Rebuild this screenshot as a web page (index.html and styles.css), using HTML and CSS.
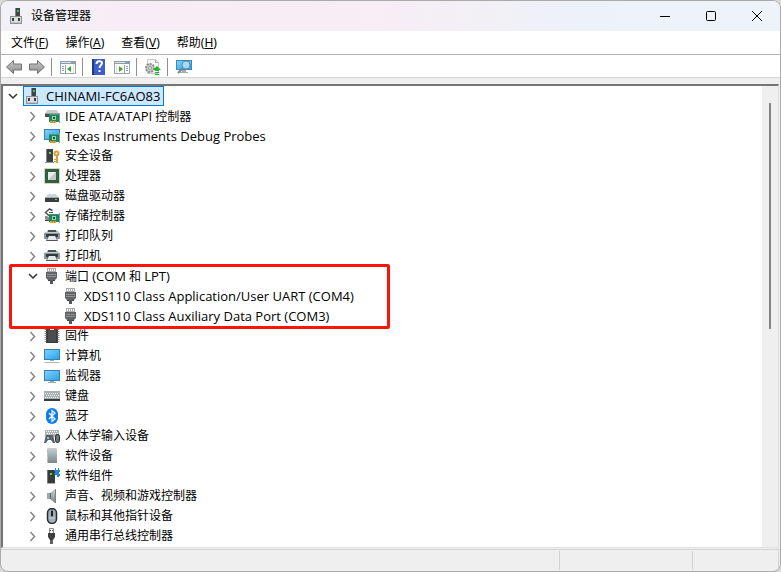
FILE: index.html
```
<!DOCTYPE html>
<html lang="zh-CN">
<head>
    <meta charset="UTF-8">
    <meta name="viewport" content="width=device-width, initial-scale=1.0">
    <title>设备管理器</title>
    <link rel="stylesheet" href="styles.css">
</head>
<body>
    <!-- Shared icons -->
    <svg class="sprite" aria-hidden="true">
        <defs>
            <linearGradient id="screen" x1="0" y1="0" x2="1" y2="1">
                <stop offset="0" stop-color="#7fd0fa"/>
                <stop offset="1" stop-color="#2ba3ec"/>
            </linearGradient>
            <linearGradient id="metal" x1="0" y1="0" x2="0" y2="1">
                <stop offset="0" stop-color="#c9ced1"/>
                <stop offset="1" stop-color="#7f878b"/>
            </linearGradient>
            <linearGradient id="arrow" x1="0" y1="0" x2="0" y2="1">
                <stop offset="0" stop-color="#c8c8c8"/>
                <stop offset="1" stop-color="#8e8e8e"/>
            </linearGradient>
        </defs>
        <symbol id="i-pc" viewBox="0 0 16 16">
            <path d="M6 0h5v9H6z" fill="#414345"/>
            <path d="M6 0h1v9H6z" fill="#85888a"/>
            <path d="M8 2h2v2H8z" fill="#37c84b"/>
            <path d="M1 8h12v8H1z" fill="#8f9295"/>
            <path d="M2 9h10v6H2z" fill="#dcdee0"/>
            <path d="M3 10h2v3H3zM9 10h2v3H9z" fill="#393b3d"/>
            <path d="M2 14h10v1H2z" fill="#bfc2c4"/>
        </symbol>
        <symbol id="i-card" viewBox="0 0 16 16">
            <path d="M5 6h10v8H5z" fill="#21845c"/>
            <path d="M5 6.500h10" stroke="#3c9c74" fill="none"/>
            <path d="M8 8h4v4H8z" fill="#8fdcb4"/>
            <path d="M9 9h2v2H9z" fill="#165a3e"/>
            <path d="M6 13h6v2H6z" fill="#e8a723"/>
            <path d="M8 13h1v2H8zM10 13h1v2h-1z" fill="#c98a1c"/>
            <path d="M15 5h1v10h-1z" fill="#8f989b"/>
        </symbol>
        <symbol id="i-ide" viewBox="0 0 16 16">
            <path d="M3 2h10l2 4H1z" fill="#c8ccce"/>
            <path d="M1 5h14v4H1z" fill="#4a4d4f"/>
            <path d="M1 5h14v1H1z" fill="#9da1a3"/>
            <use href="#i-card"/>
        </symbol>
        <symbol id="i-probe" viewBox="0 0 16 16">
            <path d="M0 1h16v11H0z" fill="#3983b4"/>
            <path d="M1 2h14v9H1z" fill="url(#screen)"/>
            <use href="#i-card"/>
        </symbol>
        <symbol id="i-security" viewBox="0 0 16 16">
            <path d="M2 1h7v13H2z" fill="#3c3e40"/>
            <path d="M2 1h1v13H2z" fill="#85888a"/>
            <path d="M5 4h2v2H5z" fill="#4ce35d"/>
            <path d="M1 14h9v1H1z" fill="#9ca0a2"/>
            <circle cx="12.500" cy="5.500" r="2" fill="none" stroke="#d99b3c" stroke-width="2"/>
            <path d="M12 8h2v7h-2zM10 11h2v1h-2zM10 13h2v1h-2z" fill="#d99b3c"/>
        </symbol>
        <symbol id="i-cpu" viewBox="0 0 16 16">
            <rect x="0.500" y="0.500" width="15" height="15" fill="none" stroke="#c2a867" stroke-dasharray="1 1"/>
            <path d="M1 1h14v14H1z" fill="#2b6048"/>
            <path d="M4 4h8v8H4z" fill="#c4c8c5"/>
            <path d="M4 4h8L4 12z" fill="#e8ebe8"/>
        </symbol>
        <symbol id="i-disk" viewBox="0 0 16 16">
            <path d="M4 6h8l3 4H1z" fill="#d2d5d7"/>
            <path d="M1 9h14v5H1z" fill="#3c3f41"/>
            <path d="M1 9h14v1H1z" fill="#a5a9ab"/>
            <path d="M11 11h2v1h-2z" fill="#4bdd59"/>
        </symbol>
        <symbol id="i-storage" viewBox="0 0 16 16">
            <path d="M8.500 2.500L5.500 1l-4 3.500 4 3.500 2-1.500" fill="none" stroke="#505456" stroke-width="1.500"/>
            <path d="M5 4h4v1H5z" fill="#505456"/>
            <path d="M1 8h2l3 2v3H3l-2-2z" fill="#8a8e90"/>
            <path d="M1 12h5v1H1z" fill="#444"/>
            <use href="#i-card"/>
        </symbol>
        <symbol id="i-printer" viewBox="0 0 16 16">
            <path d="M4 2h8l1 3H3z" fill="#4a5256"/>
            <path d="M1 4h14l1 2v5H0V6z" fill="#8d979c"/>
            <path d="M1 4h14v1H1z" fill="#c6cdd0"/>
            <path d="M12 3h2v1h-2z" fill="#44d957"/>
            <path d="M2 6h12v3H2z" fill="#35393b"/>
            <path d="M4 8h8l2 5H2z" fill="#4d5457"/>
            <path d="M5 8h6l2 4H3z" fill="#e3e9eb"/>
        </symbol>
        <symbol id="i-port" viewBox="0 0 16 16">
            <path d="M3 0h9v5H3z" fill="#a9abac"/>
            <path d="M4 1h1v2H4zM6 1h1v2H6zM8 1h1v2H8zM10 1h1v2h-1z" fill="#fff"/>
            <path d="M2 4h11v6l-2 2H4l-2-2z" fill="#626466"/>
            <path d="M3 6h9v1H3zM3 8h9v1H3z" fill="#909294"/>
            <path d="M4 12h7v1H4z" fill="#444648"/>
            <path d="M6 12h3v4H6z" fill="#55585a"/>
        </symbol>
        <symbol id="i-firmware" viewBox="0 0 16 16">
            <path d="M2 1h12v14H2z" fill="#3a3a3b"/>
            <path d="M1.500 1v14M14.500 1v14" stroke="#8b8b8b" stroke-width="2" stroke-dasharray="1 1"/>
            <path d="M4 1h8v13H4z" fill="#4b4c4d"/>
            <path d="M6 0h4v2H6z" fill="#e6e6e6"/>
        </symbol>
        <symbol id="i-monitor" viewBox="0 0 16 16">
            <path d="M0 2h16v11H0z" fill="#3482b2"/>
            <path d="M1 3h14v9H1z" fill="url(#screen)"/>
            <path d="M6 13h4v1H6zM4 14h8v1H4z" fill="#9ba8af"/>
        </symbol>
        <symbol id="i-computer" viewBox="0 0 16 16">
            <path d="M0 1h16v11H0z" fill="#3482b2"/>
            <path d="M1 2h14v9H1z" fill="url(#screen)"/>
            <path d="M6 12h4v1H6z" fill="#9ba8af"/>
            <path d="M1 14h14l1 1H0z" fill="#aab6c2"/>
        </symbol>
        <symbol id="i-keyboard" viewBox="0 0 16 16">
            <path d="M0 3h16v8H0z" fill="#a9aeb1"/>
            <path d="M1 5.500h14M2 7.500h13M1 9.500h14" stroke="#f5f7f8" stroke-dasharray="1 1"/>
            <path d="M0 11h16v2H0z" fill="#383b3d"/>
        </symbol>
        <symbol id="i-bluetooth" viewBox="0 0 16 16">
            <rect x="2" y="0" width="12" height="16" rx="6" fill="#0b7df0"/>
            <path d="M5 5l6 6-3 2.500v-11L11 5l-6 6" fill="none" stroke="#fff" stroke-width="1.200"/>
        </symbol>
        <symbol id="i-hid" viewBox="0 0 16 16">
            <path d="M1 2h14v7H1z" fill="#b0b5b8"/>
            <path d="M2 3.500h12M3 5.500h11" stroke="#fff" stroke-dasharray="1 1"/>
            <path d="M2 7h7l2 8H9l-2-3H4l-2 3H0z" fill="#596168"/>
            <path d="M3 9h2v2H3z" fill="#73c8ef"/>
            <path d="M7 9h1v1H7z" fill="#e64a3c"/>
            <rect x="11.500" y="6.500" width="4" height="8" rx="2" fill="#6c747a" stroke="#282b2e"/>
        </symbol>
        <symbol id="i-software" viewBox="0 0 16 16">
            <path d="M3 1l1-1h8l1 1v14H3z" fill="url(#metal)"/>
            <path d="M3 1h1v14H3z" fill="#b8bec1"/>
            <path d="M7 5h2v2H7z" fill="#45d7f2"/>
        </symbol>
        <symbol id="i-component" viewBox="0 0 16 16">
            <path d="M3 2h8v13H3z" fill="#393b3d"/>
            <path d="M3 2h1v13H3z" fill="#777a7c"/>
            <path d="M6 5h2v2H6z" fill="#48df57"/>
            <path d="M3 15h8v1H3z" fill="#a9acae"/>
            <path d="M11 0h1v2h2V0h1v2h1v2h-1v2h1v2h-1v1h-2V7h-2V6h-1V5h1V3h-1V2h1z" fill="#2388d8"/>
        </symbol>
        <symbol id="i-sound" viewBox="0 0 16 16">
            <path d="M3 5h3v6H3z" fill="#a0a5a8"/>
            <path d="M6 5l5-4v14l-5-4z" fill="url(#metal)"/>
            <path d="M11 1h1v14h-1z" fill="#7a7f82"/>
            <path d="M6 5h1v6H6z" fill="#606568"/>
        </symbol>
        <symbol id="i-mouse" viewBox="0 0 16 16">
            <rect x="3.500" y="0.500" width="9" height="15" rx="4.500" fill="#a4afb8" stroke="#292d31" stroke-width="1.500"/>
            <path d="M8 1v8" stroke="#43494e"/>
            <path d="M7 3h2v5H7z" fill="#1e2124"/>
            <path d="M5 10h6" stroke="#cdd5da"/>
        </symbol>
        <symbol id="i-usb" viewBox="0 0 16 16">
            <path d="M5.500 0.500h4v5h-4z" fill="#f2f2f2" stroke="#8a8a8a"/>
            <path d="M6 2h1v1H6zM8 2h1v1H8z" fill="#555"/>
            <path d="M4 5h7v4l-2 3H6L4 9z" fill="#3d3f41"/>
            <path d="M6 12h3v4H6z" fill="#606264"/>
        </symbol>
        <symbol id="i-right" viewBox="0 0 16 16">
            <path d="M5.500 4l4 4.500-4 4.500" fill="none" stroke="#858585" stroke-width="1.500"/>
        </symbol>
        <symbol id="i-down" viewBox="0 0 16 16">
            <path d="M4 6l4 4 4-4" fill="none" stroke="#333" stroke-width="1.500"/>
        </symbol>
    </svg>

    <div class="window">
        <header class="titlebar">
            <svg class="icon"><use href="#i-pc"/></svg>
            <h1>设备管理器</h1>
            <div class="window-controls">
                <button type="button" aria-label="最小化"><svg class="icon" viewBox="0 0 16 16"><path d="M3 8.500h10"/></svg></button>
                <button type="button" aria-label="最大化"><svg class="icon" viewBox="0 0 16 16"><rect x="3.500" y="3.500" width="9" height="9" rx="1"/></svg></button>
                <button type="button" aria-label="关闭"><svg class="icon" viewBox="0 0 16 16"><path d="M3 3l10 10M13 3L3 13"/></svg></button>
            </div>
        </header>

        <nav class="menubar">
            <button type="button">文件(<u>F</u>)</button>
            <button type="button">操作(<u>A</u>)</button>
            <button type="button">查看(<u>V</u>)</button>
            <button type="button">帮助(<u>H</u>)</button>
        </nav>

        <div class="toolbar">
            <button type="button" aria-label="后退">
                <svg class="icon" viewBox="0 0 16 16"><path d="M0.500 8L7.500 1.500v3.500h8v6h-8v3.500z" fill="url(#arrow)" stroke="#707070"/></svg>
            </button>
            <button type="button" aria-label="前进">
                <svg class="icon" viewBox="0 0 16 16"><path d="M15.500 8L8.500 1.500v3.500h-8v6h8v3.500z" fill="url(#arrow)" stroke="#707070"/></svg>
            </button>
            <span class="separator"></span>
            <button type="button" aria-label="显示控制台树">
                <svg class="icon" viewBox="0 0 16 16">
                    <path d="M0.500 2.500h15v12H0.500z" fill="#fff" stroke="#9aa3ab"/>
                    <path d="M0 2h16v3H0z" fill="#8f9ba7"/>
                    <path d="M1 3h10v1H1z" fill="#dfe4e8"/>
                    <path d="M5.500 6v9" stroke="#9aa3ab"/>
                    <path d="M2 7.500h2M2 9.500h2M2 11.500h2" stroke="#7d9cc4"/>
                    <path d="M11 7v6l-4-3z" fill="#3ba72f"/>
                    <path d="M13.500 6v8" stroke="#ddd"/>
                </svg>
            </button>
            <span class="separator"></span>
            <button type="button" aria-label="帮助">
                <svg class="icon" viewBox="0 0 16 16">
                    <path d="M1 0h13v16H1z" fill="#3e5fc5"/>
                    <path d="M1 0h2v16H1z" fill="#233a84"/>
                    <path d="M5.500 5c0-3.500 5.500-3.500 5.500-1 0 2-2.500 2.500-2.500 5M8.500 11v2" fill="none" stroke="#fff" stroke-width="2"/>
                </svg>
            </button>
            <button type="button" aria-label="属性">
                <svg class="icon" viewBox="0 0 16 16">
                    <path d="M0.500 2.500h15v12H0.500z" fill="#fff" stroke="#9aa3ab"/>
                    <path d="M0 2h16v3H0z" fill="#8f9ba7"/>
                    <path d="M1 3h10v1H1z" fill="#dfe4e8"/>
                    <path d="M10.500 6v9" stroke="#9aa3ab"/>
                    <path d="M12 7.500h2M12 9.500h2M12 11.500h2" stroke="#7d9cc4"/>
                    <path d="M5 7v6l4-3z" fill="#3ba72f"/>
                    <path d="M2.500 6v8" stroke="#ddd"/>
                </svg>
            </button>
            <span class="separator"></span>
            <button type="button" aria-label="更新驱动程序">
                <svg class="icon" viewBox="0 0 16 16">
                    <path d="M2.500 0.500h8l3 3v11h-11z" fill="#f7f7f7" stroke="#c8c8c8"/>
                    <path d="M10.500 0.500v3h3" fill="none" stroke="#aaa"/>
                    <circle cx="5" cy="9" r="4" fill="#c4c4c4" stroke="#8c8c8c" stroke-width="2" stroke-dasharray="2 1"/>
                    <circle cx="5" cy="9" r="3" fill="#d0d0d0"/>
                    <circle cx="5" cy="9" r="1.500" fill="#fff" stroke="#888"/>
                    <path d="M12 7l4 4h-2v1h-4v-1H8z" fill="#15b82b"/>
                    <path d="M10 13h4v1h-4zM10 15h4v1h-4z" fill="#15b82b"/>
                </svg>
            </button>
            <span class="separator"></span>
            <button type="button" aria-label="扫描检测硬件改动">
                <svg class="icon" viewBox="0 0 16 16">
                    <path d="M0 1h16v10H0z" fill="#398abb"/>
                    <path d="M1 2h14v8H1z" fill="url(#screen)"/>
                    <path d="M6 11h4v2H6zM4 13h8v1H4z" fill="#a3adb2"/>
                    <path d="M7 9l-5 5" stroke="#70848f" stroke-width="2"/>
                    <circle cx="10" cy="6" r="4" fill="#b9e5fb" fill-opacity="0.800" stroke="#6d8896"/>
                </svg>
            </button>
        </div>

        <main class="content">
            <ul class="tree">
                <li>
                    <div class="row">
                        <button type="button" class="toggle" aria-label="折叠"><svg class="icon"><use href="#i-down"/></svg></button>
                        <span class="node selected"><svg class="icon"><use href="#i-pc"/></svg><span class="latin">CHINAMI-FC6AO83</span></span>
                    </div>
                    <ul>
                        <li><div class="row"><button type="button" class="toggle" aria-label="展开"><svg class="icon"><use href="#i-right"/></svg></button><span class="node"><svg class="icon"><use href="#i-ide"/></svg><span><span class="latin">IDE ATA/ATAPI</span> 控制器</span></span></div></li>
                        <li><div class="row"><button type="button" class="toggle" aria-label="展开"><svg class="icon"><use href="#i-right"/></svg></button><span class="node"><svg class="icon"><use href="#i-probe"/></svg><span class="latin">Texas Instruments Debug Probes</span></span></div></li>
                        <li><div class="row"><button type="button" class="toggle" aria-label="展开"><svg class="icon"><use href="#i-right"/></svg></button><span class="node"><svg class="icon"><use href="#i-security"/></svg><span>安全设备</span></span></div></li>
                        <li><div class="row"><button type="button" class="toggle" aria-label="展开"><svg class="icon"><use href="#i-right"/></svg></button><span class="node"><svg class="icon"><use href="#i-cpu"/></svg><span>处理器</span></span></div></li>
                        <li><div class="row"><button type="button" class="toggle" aria-label="展开"><svg class="icon"><use href="#i-right"/></svg></button><span class="node"><svg class="icon"><use href="#i-disk"/></svg><span>磁盘驱动器</span></span></div></li>
                        <li><div class="row"><button type="button" class="toggle" aria-label="展开"><svg class="icon"><use href="#i-right"/></svg></button><span class="node"><svg class="icon"><use href="#i-storage"/></svg><span>存储控制器</span></span></div></li>
                        <li><div class="row"><button type="button" class="toggle" aria-label="展开"><svg class="icon"><use href="#i-right"/></svg></button><span class="node"><svg class="icon"><use href="#i-printer"/></svg><span>打印队列</span></span></div></li>
                        <li><div class="row"><button type="button" class="toggle" aria-label="展开"><svg class="icon"><use href="#i-right"/></svg></button><span class="node"><svg class="icon"><use href="#i-printer"/></svg><span>打印机</span></span></div></li>
                        <li class="ports">
                            <div class="row"><button type="button" class="toggle" aria-label="折叠"><svg class="icon"><use href="#i-down"/></svg></button><span class="node"><svg class="icon"><use href="#i-port"/></svg><span>端口 <span class="latin">(COM</span> 和 <span class="latin">LPT)</span></span></span></div>
                            <ul>
                                <li><div class="row"><span class="node"><svg class="icon"><use href="#i-port"/></svg><span class="latin">XDS110 Class Application/User UART (COM4)</span></span></div></li>
                                <li><div class="row"><span class="node"><svg class="icon"><use href="#i-port"/></svg><span class="latin">XDS110 Class Auxiliary Data Port (COM3)</span></span></div></li>
                            </ul>
                        </li>
                        <li><div class="row"><button type="button" class="toggle" aria-label="展开"><svg class="icon"><use href="#i-right"/></svg></button><span class="node"><svg class="icon"><use href="#i-firmware"/></svg><span>固件</span></span></div></li>
                        <li><div class="row"><button type="button" class="toggle" aria-label="展开"><svg class="icon"><use href="#i-right"/></svg></button><span class="node"><svg class="icon"><use href="#i-computer"/></svg><span>计算机</span></span></div></li>
                        <li><div class="row"><button type="button" class="toggle" aria-label="展开"><svg class="icon"><use href="#i-right"/></svg></button><span class="node"><svg class="icon"><use href="#i-monitor"/></svg><span>监视器</span></span></div></li>
                        <li><div class="row"><button type="button" class="toggle" aria-label="展开"><svg class="icon"><use href="#i-right"/></svg></button><span class="node"><svg class="icon"><use href="#i-keyboard"/></svg><span>键盘</span></span></div></li>
                        <li><div class="row"><button type="button" class="toggle" aria-label="展开"><svg class="icon"><use href="#i-right"/></svg></button><span class="node"><svg class="icon"><use href="#i-bluetooth"/></svg><span>蓝牙</span></span></div></li>
                        <li><div class="row"><button type="button" class="toggle" aria-label="展开"><svg class="icon"><use href="#i-right"/></svg></button><span class="node"><svg class="icon"><use href="#i-hid"/></svg><span>人体学输入设备</span></span></div></li>
                        <li><div class="row"><button type="button" class="toggle" aria-label="展开"><svg class="icon"><use href="#i-right"/></svg></button><span class="node"><svg class="icon"><use href="#i-software"/></svg><span>软件设备</span></span></div></li>
                        <li><div class="row"><button type="button" class="toggle" aria-label="展开"><svg class="icon"><use href="#i-right"/></svg></button><span class="node"><svg class="icon"><use href="#i-component"/></svg><span>软件组件</span></span></div></li>
                        <li><div class="row"><button type="button" class="toggle" aria-label="展开"><svg class="icon"><use href="#i-right"/></svg></button><span class="node"><svg class="icon"><use href="#i-sound"/></svg><span>声音、视频和游戏控制器</span></span></div></li>
                        <li><div class="row"><button type="button" class="toggle" aria-label="展开"><svg class="icon"><use href="#i-right"/></svg></button><span class="node"><svg class="icon"><use href="#i-mouse"/></svg><span>鼠标和其他指针设备</span></span></div></li>
                        <li><div class="row"><button type="button" class="toggle" aria-label="展开"><svg class="icon"><use href="#i-right"/></svg></button><span class="node"><svg class="icon"><use href="#i-usb"/></svg><span>通用串行总线控制器</span></span></div></li>
                    </ul>
                </li>
            </ul>
            <div class="scrollbar"><div class="thumb"></div></div>
        </main>

        <footer class="statusbar">
            <span></span>
            <span></span>
            <span></span>
        </footer>
    </div>
</body>
</html>
```
FILE: styles.css
```
* {
    margin: 0;
    padding: 0;
    box-sizing: border-box;
}

body {
    font-family: "Noto Sans", "Noto Sans CJK SC", sans-serif;
    font-size: 12px;
    line-height: 20px;
    color: #000;
    background-color: #d9d9d9;
}

button {
    font: inherit;
    color: inherit;
    background: none;
    border: none;
}

ul {
    list-style: none;
}

.sprite {
    position: absolute;
    width: 0;
    height: 0;
}

.icon {
    display: block;
    flex: none;
    width: 16px;
    height: 16px;
}

.latin {
    font-family: "Open Sans", "Noto Sans", sans-serif;
    font-size: 13px;
}

.window {
    display: flex;
    flex-direction: column;
    min-height: 100vh;
    background-color: #efefef;
    border: 1px solid #ababab;
    border-radius: 8px;
    overflow: hidden;
}

/* Title bar */
.titlebar {
    display: flex;
    align-items: center;
    height: 30px;
    padding-left: 8px;
    background: linear-gradient(90deg, #f2f1f7, #f8edf6 16%, #f9edf5 38%, #f6eef6 52%, #f1f1f6 65%, #edf1fb 74%, #edf3f8 80%);
}

.titlebar h1 {
    margin-left: 6px;
    font-size: 12px;
    font-weight: normal;
}

.window-controls {
    display: flex;
    margin-left: auto;
}

.window-controls button {
    display: flex;
    align-items: center;
    justify-content: center;
    width: 46px;
    height: 30px;
}

.window-controls .icon {
    fill: none;
    stroke: #000;
}

/* Menu and toolbar */
.menubar {
    display: flex;
    gap: 17px;
    height: 24px;
    padding-left: 10px;
    background-color: #fff;
    border-bottom: 1px solid #b2b2b2;
}

.toolbar {
    display: flex;
    align-items: center;
    height: 23px;
    padding: 2px 0 0 1px;
    background-color: #fff;
    border-bottom: 1px solid #d6d6d6;
}

.toolbar button {
    display: flex;
    justify-content: center;
    width: 23px;
}

.separator {
    width: 1px;
    height: 18px;
    margin: 0 4px 0 3px;
    background-color: #8f8f8f;
}

/* Device tree */
.content {
    display: flex;
    flex: 1;
    margin: 6px 1px 1px 0;
    background-color: #fff;
    border-top: 2px solid #757575;
    border-left: 2px solid #757575;
    border-right: 1px solid #e0e0e0;
    border-bottom: 1px solid #e0e0e0;
}

.tree {
    flex: 1;
    padding-left: 2px;
}

.tree ul {
    padding-left: 20px;
}

.tree .ports ul {
    padding-left: 35px;
}

.row {
    display: flex;
    align-items: center;
    height: 20px;
}

.toggle {
    width: 16px;
}

.node {
    display: flex;
    align-items: center;
    gap: 5px;
    height: 20px;
    padding: 0 3px;
    white-space: nowrap;
}

.selected {
    margin-left: 2px;
    padding: 0 3px 0 1px;
    background-color: #cce8ff;
    border: 1px solid #0078d7;
}

.ports {
    position: relative;
}

/* Highlight frame around the serial ports */
.ports::after {
    content: "";
    box-sizing: border-box;
    position: absolute;
    top: -2px;
    left: -16px;
    width: 381px;
    height: 65px;
    border: 3px solid #fb1409;
    border-radius: 2px;
    pointer-events: none;
}

.scrollbar {
    width: 16px;
    padding: 17px 7px 0;
    background-color: #efefef;
}

.thumb {
    width: 2px;
    height: 51%;
    background-color: #858585;
}

/* Status bar */
.statusbar {
    display: flex;
    height: 22px;
    padding: 1px;
    border-top: 1px solid #d2d2d2;
}

.statusbar span {
    border-right: 1px solid #d2d2d2;
}

.statusbar span:nth-child(1) {
    flex: 1;
}

.statusbar span:nth-child(2) {
    width: 133px;
}

.statusbar span:nth-child(3) {
    width: 86px;
}
```
